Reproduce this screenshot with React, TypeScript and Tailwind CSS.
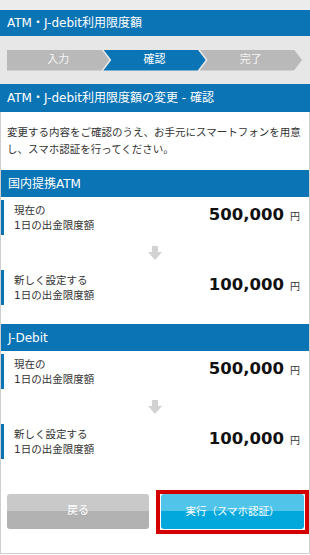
const BLUE = "bg-[#0b74b5]";

function DownArrow() {
  return (
    <svg width="14" height="14" viewBox="0 0 14 14">
      <path d="M4 0H10V6H14L7 14L0 6H4Z" fill="#d2d2d2" />
    </svg>
  );
}

function Step({ label, active, first }: { label: string; active?: boolean; first?: boolean }) {
  return (
    <div
      className={
        "flex-1 h-[21px] flex items-center justify-center text-[11px] " +
        (active ? "bg-[#0b74b5] text-white " : "bg-[#b9b9b9] text-[#f5f5f5] ") +
        (first
          ? "[clip-path:polygon(0_0,calc(100%-8px)_0,100%_50%,calc(100%-8px)_100%,0_100%)]"
          : "-ml-[6px] [clip-path:polygon(0_0,calc(100%-8px)_0,100%_50%,calc(100%-8px)_100%,0_100%,8px_50%)]")
      }
    >
      {label}
    </div>
  );
}

function LimitRow({ top, amount }: { top: string; amount: string }) {
  return (
    <div className="h-[35px] flex items-center">
      <div className="h-full border-l-[3px] border-[#0b74b5] pl-[10px] flex flex-col justify-center text-[10.5px] leading-[15px] text-[#333]">
        <span>{top}</span>
        <span>1日の出金限度額</span>
      </div>
      <div className="ml-auto pr-[9px] flex items-baseline -mt-[4px]">
        <span className="font-['DejaVu_Sans'] font-bold text-[16.5px] text-[#111]">{amount}</span>
        <span className="ml-[6px] text-[10px] text-[#333]">円</span>
      </div>
    </div>
  );
}

function Section({ title, current, next }: { title: string; current: string; next: string }) {
  return (
    <div>
      <div className={`${BLUE} h-[27px] flex items-center px-[7px] text-[12px] text-white`}>{title}</div>
      <div className="pt-[3px]">
        <LimitRow top="現在の" amount={current} />
        <div className="h-[35px] flex items-center justify-center">
          <DownArrow />
        </div>
        <LimitRow top="新しく設定する" amount={next} />
      </div>
    </div>
  );
}

export default function App() {
  return (
    <div className="w-[310px] h-[555px] bg-white overflow-hidden font-['DejaVu_Sans','Noto_Sans_CJK_JP',sans-serif]">
      <div className="h-[10px] bg-[#ececec]" />
      <div className={`${BLUE} h-[26px] flex items-center px-[7px] text-[12px] text-white`}>
        ATM・J-debit利用限度額
      </div>
      <div className="bg-[#e7e7e7] h-[48px] flex items-center pl-[7px] pr-[8px]">
        <Step label="入力" first />
        <Step label="確認" active />
        <Step label="完了" />
      </div>
      <div className={`${BLUE} h-[28px] flex items-center px-[7px] text-[12px] text-white`}>
        ATM・J-debit利用限度額の変更 - 確認
      </div>
      <div className="border-x border-b border-[#cfcfcf]">
        <p className="px-[6px] pt-[12px] pb-[12px] text-[10.5px] leading-[17px] text-[#333]">
          変更する内容をご確認のうえ、お手元にスマートフォンを用意し、スマホ認証を行ってください。
        </p>
        <Section title="国内提携ATM" current="500,000" next="100,000" />
        <div className="h-[19px]" />
        <Section title="J-Debit" current="500,000" next="100,000" />
        <div className="flex pl-[6px] pt-[35px] pb-[24px]">
          <button className="w-[142px] h-[35px] rounded-[3px] bg-[linear-gradient(#c9c9c9_50%,#b2b2b2_50%)] text-[11px] text-white">
            戻る
          </button>
          <div className="relative ml-[12px]">
            <button className="w-[143px] h-[35px] rounded-[3px] bg-[linear-gradient(#50c4e9_50%,#02a8dc_50%)] text-[10.5px] text-white">
              実行（スマホ認証）
            </button>
            <div className="absolute -left-[5px] -right-[5px] -top-[4px] -bottom-[5px] border-[4px] border-[#d40000]" />
          </div>
        </div>
      </div>
    </div>
  );
}
